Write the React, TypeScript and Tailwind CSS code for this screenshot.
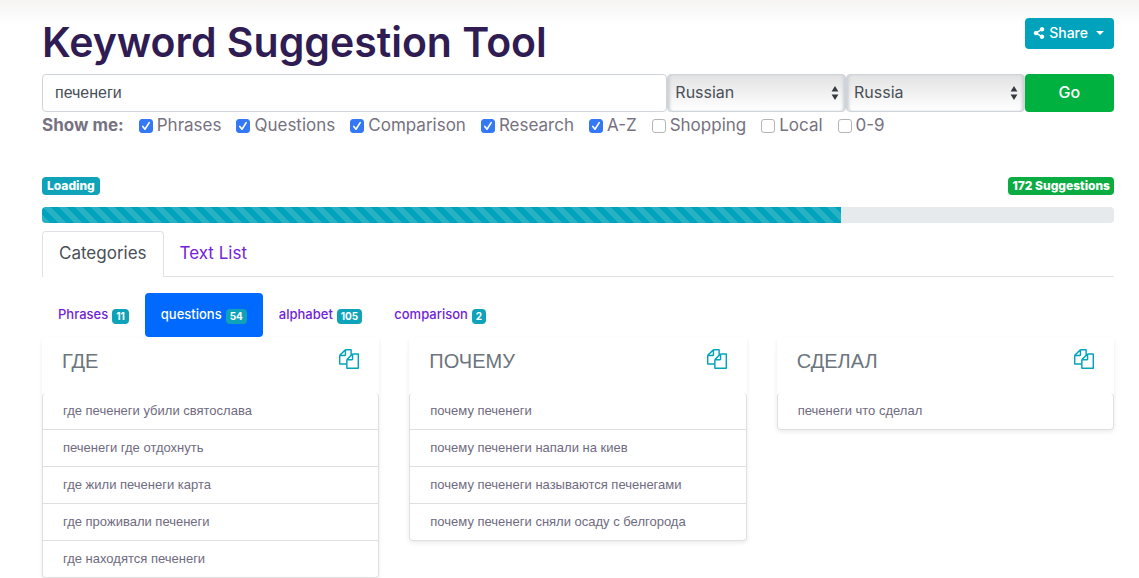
import { useState } from "react";
import { FaShareAlt } from "react-icons/fa";
import { clsx } from "clsx";

const filters = [
  { name: "Phrases", checked: true },
  { name: "Questions", checked: true },
  { name: "Comparison", checked: true },
  { name: "Research", checked: true },
  { name: "A-Z", checked: true },
  { name: "Shopping", checked: false },
  { name: "Local", checked: false },
  { name: "0-9", checked: false },
];

const categories = [
  { name: "Phrases", count: 11 },
  { name: "questions", count: 54 },
  { name: "alphabet", count: 105 },
  { name: "comparison", count: 2 },
];

const groups = [
  {
    title: "ГДЕ",
    keywords: [
      "где печенеги убили святослава",
      "печенеги где отдохнуть",
      "где жили печенеги карта",
      "где проживали печенеги",
      "где находятся печенеги",
    ],
  },
  {
    title: "ПОЧЕМУ",
    keywords: [
      "почему печенеги",
      "почему печенеги напали на киев",
      "почему печенеги называются печенегами",
      "почему печенеги сняли осаду с белгорода",
    ],
  },
  {
    title: "СДЕЛАЛ",
    keywords: ["печенеги что сделал"],
  },
];

const CopyIcon = () => (
  <svg viewBox="0 0 1792 1792" className="size-5" fill="currentColor" aria-hidden="true">
    <path d="M1696 384q40 0 68 28t28 68v1216q0 40-28 68t-68 28h-960q-40 0-68-28t-28-68v-288h-544q-40 0-68-28t-28-68v-672q0-40 20-88t48-76l408-408q28-28 76-48t88-20h416q40 0 68 28t28 68v328q68-40 128-40h416zm-544 213l-299 299h299v-299zm-640-384l-299 299h299v-299zm196 647l316-316v-416h-384v416q0 40-28 68t-68 28h-416v640h512v-256q0-40 20-88t48-76zm956 804v-1152h-384v416q0 40-28 68t-68 28h-416v640h896z" />
  </svg>
);

const Select = ({ label, options }: { label: string; options: string[] }) => (
  <div className="relative col-span-2">
    <select
      aria-label={label}
      className="h-[38px] w-full appearance-none rounded border border-[#ced4da] bg-linear-to-b from-[#e3e3e3] to-white px-[7px] pb-0.5 text-base text-[#495057] shadow-[inset_3px_0_3px_-1px_#cdd1d6,inset_-3px_0_3px_-1px_#cdd1d6]"
    >
      {options.map((option) => (
        <option key={option}>{option}</option>
      ))}
    </select>
    <svg
      viewBox="0 0 8 14"
      className="pointer-events-none absolute right-[7px] top-3 h-3.5 w-2 fill-[#343a40]"
      aria-hidden="true"
    >
      <path d="M4 0l3.4 5.6H.6zM4 14L.6 8.4h6.8z" />
    </svg>
  </div>
);

const FilterBox = ({ name, checked }: { name: string; checked: boolean }) => (
  <label className="flex items-center gap-1">
    <span className="relative flex size-3.5">
      <input
        type="checkbox"
        defaultChecked={checked}
        className="peer size-3.5 appearance-none rounded-[3px] border border-[#b5b5b5] bg-white checked:border-[#3478f6] checked:bg-[#3478f6]"
      />
      <svg
        viewBox="0 0 14 14"
        className="pointer-events-none absolute inset-0 hidden fill-none stroke-white stroke-[1.6] peer-checked:block"
        aria-hidden="true"
      >
        <path d="M3.8 7.4L6 10.2l4.2-6.6" strokeLinecap="round" strokeLinejoin="round" />
      </svg>
    </span>
    {name}
  </label>
);

const GroupCard = ({ title, keywords }: { title: string; keywords: string[] }) => (
  <section className="rounded bg-white shadow-[0_2px_4px_rgba(0,0,0,0.08)]">
    <div className="flex h-14 justify-between px-5 pt-3">
      <h2 className="font-['Liberation_Sans',sans-serif] text-xl leading-6 text-[#6c757d]">
        {title}
      </h2>
      <button type="button" aria-label="Copy" className="flex self-start text-[#00a3bb]">
        <CopyIcon />
      </button>
    </div>
    <ul className="divide-y divide-[#dfdfdf] rounded border border-t-0 border-[#dfdfdf]">
      {keywords.map((keyword) => (
        <li
          key={keyword}
          className="px-5 py-2 font-['Liberation_Sans',sans-serif] text-[13px] leading-5 text-[#6f6b80]"
        >
          {keyword}
        </li>
      ))}
    </ul>
  </section>
);

export default function App() {
  const [active, setActive] = useState("questions");

  return (
    <main className="bg-linear-to-b from-[#f5f4f3] to-white to-[24px] pl-[42px] pr-[25px] pt-[18px] font-['Inter','Liberation_Sans',sans-serif] text-[#76727f]">
      <header className="flex h-14 items-start justify-between">
        <h1 className="text-[41px] font-semibold leading-[48px] text-[#2f1c53]">
          Keyword Suggestion Tool
        </h1>
        <button
          type="button"
          className="flex h-[31px] items-center rounded bg-[#00a3bb] px-2 pb-px text-sm font-medium text-white"
        >
          <FaShareAlt className="mr-1 size-3" />
          Share
          <span className="ml-2 mr-0.5 border-x-4 border-t-4 border-x-transparent border-t-white" />
        </button>
      </header>

      <form onSubmit={(e) => e.preventDefault()}>
        <div className="grid grid-cols-12">
          <input
            type="text"
            aria-label="Keyword"
            defaultValue="печенеги"
            className="col-span-7 h-[38px] rounded border border-[#ced4da] bg-white px-3 font-['Liberation_Sans',sans-serif] text-base text-[#495057]"
          />
          <Select label="Language" options={["Russian", "English"]} />
          <Select label="Country" options={["Russia", "United States"]} />
          <button
            type="submit"
            className="h-[38px] rounded bg-[#00b140] pb-0.5 text-base font-medium text-white"
          >
            Go
          </button>
        </div>
        <fieldset className="mt-0.5 flex h-6 items-center gap-[15px] text-[17px]">
          <span className="font-bold">Show me:</span>
          {filters.map((filter) => (
            <FilterBox key={filter.name} {...filter} />
          ))}
        </fieldset>
      </form>

      <div className="mt-[39px] flex justify-between text-xs font-extrabold text-white">
        <span className="rounded bg-[#0ea3b8] px-[5px] leading-[18px]">Loading</span>
        <span className="rounded bg-[#0bac41] px-1 leading-[18px]">172 Suggestions</span>
      </div>
      <div className="mt-3 h-4 overflow-hidden rounded bg-[#e7eaed]">
        <div className="h-full w-[74.5%] bg-[#00a3bb] bg-[linear-gradient(45deg,rgba(255,255,255,0.15)_25%,transparent_25%,transparent_50%,rgba(255,255,255,0.15)_50%,rgba(255,255,255,0.15)_75%,transparent_75%,transparent)] bg-size-[16px_16px]" />
      </div>

      <nav className="mt-2 flex border-b border-[#dee2e6] text-[17px] leading-6">
        <a
          href="#categories"
          className="-mb-px rounded-t border border-b-0 border-[#dee2e6] bg-white px-4 pb-3 pt-[9px] text-[#495057]"
        >
          Categories
        </a>
        <a href="#text-list" className="px-4 pt-2.5 text-[#7222d8]">
          Text List
        </a>
      </nav>

      <div className="mt-4 flex text-[13px] font-medium">
        {categories.map(({ name, count }) => (
          <button
            key={name}
            type="button"
            onClick={() => setActive(name)}
            className={clsx(
              "flex h-11 items-center gap-1 rounded px-4",
              name === active ? "bg-[#0069ff] text-white" : "text-[#7222d8]"
            )}
          >
            {name}
            <span className="mt-0.5 rounded bg-[#0ea3b8] px-1 text-[10px] font-bold leading-[15px] text-white">
              {count}
            </span>
          </button>
        ))}
      </div>

      <div className="grid grid-cols-3 items-start gap-[30px]">
        {groups.map((group) => (
          <GroupCard key={group.title} {...group} />
        ))}
      </div>
    </main>
  );
}
